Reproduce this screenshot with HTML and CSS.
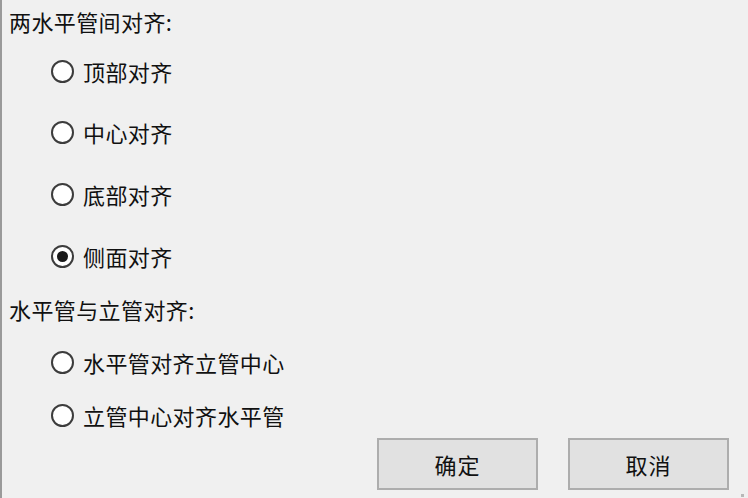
FILE: index.html
```html
<!DOCTYPE html>
<html lang="zh-CN">
<head>
<meta charset="utf-8">
<title>对齐</title>
<link rel="stylesheet" href="styles.css">
</head>
<body>
<div class="dialog">
  <div class="form">
    <div class="label r-label1">两水平管间对齐:</div>
    <label class="opt r-a"><span class="radio"></span><span>顶部对齐</span></label>
    <label class="opt r-b"><span class="radio"></span><span>中心对齐</span></label>
    <label class="opt r-b"><span class="radio"></span><span>底部对齐</span></label>
    <label class="opt r-b"><span class="radio checked"></span><span>侧面对齐</span></label>
    <div class="label r-label2">水平管与立管对齐:</div>
    <label class="opt r-b"><span class="radio"></span><span>水平管对齐立管中心</span></label>
    <label class="opt r-c"><span class="radio"></span><span>立管中心对齐水平管</span></label>
  </div>
  <div class="buttons">
    <button class="btn">确定</button>
    <button class="btn">取消</button>
  </div>
  <span class="grip"></span>
</div>
</body>
</html>
```
FILE: styles.css
```css
html, body {
  margin: 0;
  padding: 0;
  background: #f0f0f0;
}
body {
  width: 748px;
  height: 498px;
  overflow: hidden;
  font-family: "Noto Sans CJK SC", "Microsoft YaHei", sans-serif;
  font-size: 22px;
  color: #111;
}
.dialog {
  position: relative;
  box-sizing: border-box;
  height: 498px;
  border-left: 2px solid #9a9a9a;
}
.form {
  display: grid;
  grid-template-rows: 41px 60px 62px 62px 62px 44px 62px 44px;
}
.label {
  display: flex;
  align-items: center;
  padding-left: 7px;
  letter-spacing: 0.4px;
}
.opt {
  display: flex;
  align-items: center;
  padding-left: 49px;
  gap: 9px;
  letter-spacing: 0.4px;
}
.radio {
  box-sizing: border-box;
  width: 23px;
  height: 23px;
  border-radius: 50%;
  border: 2px solid #3c3c3c;
  background: #fff;
  display: flex;
  align-items: center;
  justify-content: center;
  flex: none;
}
.radio.checked::after {
  content: "";
  width: 11px;
  height: 11px;
  border-radius: 50%;
  background: #1a1a1a;
}
.buttons {
  display: flex;
  justify-content: flex-end;
  gap: 30px;
  padding: 1px 19px 0 0;
}
.btn {
  box-sizing: border-box;
  width: 161px;
  height: 52px;
  border: 2px solid #adadad;
  background: #e1e1e1;
  font-family: inherit;
  font-size: 22px;
  color: #111;
  padding: 0;
  letter-spacing: 1px;
}
.grip {
  position: absolute;
  right: 4px;
  bottom: 1px;
  width: 3px;
  height: 3px;
  background: #b8b8b8;
}
```
